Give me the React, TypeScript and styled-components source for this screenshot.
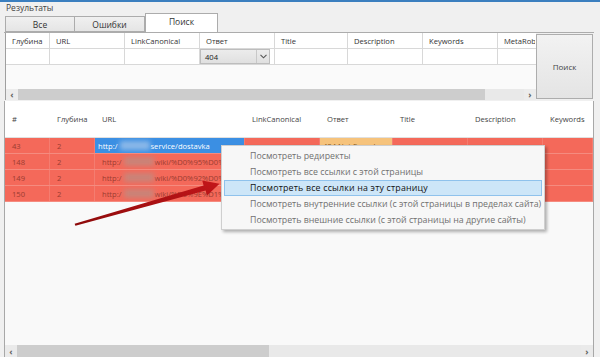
import React from 'react';
import styled, { createGlobalStyle } from 'styled-components';

const GlobalStyle = createGlobalStyle`
	html, body {
		margin: 0;
		padding: 0;
		background: #f0f0f0;
	}
	body {
		font-family: 'Open Sans', 'Noto Sans', 'Liberation Sans', sans-serif;
		font-size: 8.5px;
		color: #333;
	}
`;

const Window = styled.div`
	position: relative;
	width: 600px;
	height: 357px;
	overflow: hidden;
	background: #f0f0f0;
	border-top: 2px solid #3b7fbf;
	box-sizing: border-box;
	display: flex;
	flex-direction: column;
`;

const Caption = styled.div`
	height: 11px;
	line-height: 11px;
	padding-left: 6px;
	color: #444;
`;

const TabStrip = styled.div`
	height: 19px;
	padding-left: 5px;
	display: flex;
	align-items: flex-end;
`;

const Tab = styled.div<{ $active?: boolean }>`
	width: ${(p) => (p.$active ? 73 : 70)}px;
	height: ${(p) => (p.$active ? 19 : 16)}px;
	box-sizing: border-box;
	border: 1px solid #acacac;
	border-bottom: ${(p) => (p.$active ? 'none' : '1px solid #acacac')};
	border-left: ${(p) => (p.$active ? '1px solid #acacac' : 'none')};
	background: ${(p) =>
		p.$active ? '#ffffff' : 'linear-gradient(#f0f0f0, #e5e5e5)'};
	display: flex;
	align-items: center;
	justify-content: center;
	padding-bottom: ${(p) => (p.$active ? 3 : 0)}px;
	color: #333;

	&:first-child {
		border-left: 1px solid #acacac;
	}
`;

const Body = styled.div`
	flex: 1;
	display: flex;
	flex-direction: column;
	padding: 0 6px 0 4px;
	min-height: 0;
`;

const TopSection = styled.div`
	height: 68px;
	display: flex;
	padding-left: 1px;
	border-top: 1px solid #acacac;
	box-sizing: border-box;
	font-size: 7.6px;
`;

const FilterBox = styled.div`
	width: 530px;
	display: flex;
	flex-direction: column;
	background: #fafafa;
	border-left: 1px solid #9f9f9f;
`;

const FilterRow = styled.div<{ $header?: boolean }>`
	display: grid;
	grid-template-columns: 44px 75px 75px 75px 73px 75px 75px 37px;
	height: 16px;
	background: #fff;
	border-bottom: 1px solid #d8d8d8;
	box-sizing: border-box;
	color: ${(p) => (p.$header ? '#333' : '#222')};
`;

const FilterCell = styled.div`
	border-right: 1px solid #d8d8d8;
	padding-left: 6px;
	display: flex;
	align-items: center;
	overflow: hidden;
	white-space: nowrap;

	&:last-child {
		border-right: none;
	}
`;

const Select = styled.div`
	height: 15px;
	background: linear-gradient(#ececec, #e0e0e0);
	border: 1px solid #bdbdbd;
	box-sizing: border-box;
	display: flex;
	align-items: center;
	justify-content: space-between;
	padding-left: 4px;
	flex: 1;
	margin: 0 4px 0 -6px;
`;

const SelectArrow = styled.span`
	width: 12px;
	height: 100%;
	border-left: 1px solid #c8c8c8;
	display: flex;
	align-items: center;
	justify-content: center;
`;

const FilterSpacer = styled.div`
	flex: 1;
`;

const ScrollBar = styled.div`
	height: 11px;
	display: flex;
	align-items: center;
	background: #ececec;
	color: #555;
`;

const ScrollTrack = styled.div`
	flex: 1;
	height: 100%;
	background: #e9e9e9;
	display: flex;
`;

const ScrollThumb = styled.div`
	height: 100%;
	background: #cdcdcd;
`;

const ScrollArrow = styled.span`
	width: 12px;
	text-align: center;
	font-size: 9px;
	font-weight: 700;
	line-height: 11px;
	color: #606060;
`;

const SearchButton = styled.div`
	width: 57px;
	margin-top: 1px;
	height: 65px;
	box-sizing: border-box;
	border: 1px solid #adadad;
	background: linear-gradient(#f2f2f2, #e4e4e4);
	display: flex;
	align-items: center;
	justify-content: center;
	color: #444;
	font-size: 8px;
`;

const GridPanel = styled.div`
	flex: 1;
	margin-top: 1px;
	display: flex;
	flex-direction: column;
	border-left: 1px solid #a8a8a8;
	border-right: 1px solid #a8a8a8;
	background: #f9f9f9;
	font-size: 7.6px;
`;

const GRID_COLS = '45px 45px 150px 75px 73px 75px 75px 1fr';

const GridHeader = styled.div`
	display: grid;
	grid-template-columns: ${GRID_COLS};
	height: 36px;
	background: #fff;
	border-bottom: 1px solid #e0e0e0;
	color: #444;
`;

const HeadCell = styled.div`
	display: flex;
	align-items: center;
	padding-left: 7px;
	white-space: nowrap;
	overflow: hidden;
`;

const GridRow = styled.div`
	display: grid;
	grid-template-columns: ${GRID_COLS};
	height: 16px;
	background: #f4695a;
	border-bottom: 1px solid #f58b7f;
	box-sizing: border-box;
	color: #9b3c31;
`;

const Cell = styled.div<{ $tone?: 'selected' | 'warn' }>`
	display: flex;
	align-items: center;
	white-space: nowrap;
	overflow: hidden;
	border-right: 1px solid #f47d70;
	background: ${(p) =>
		p.$tone === 'selected' ? '#3b8fe3' : p.$tone === 'warn' ? '#f6c37c' : 'transparent'};
	color: ${(p) => (p.$tone === 'selected' ? '#fff' : p.$tone === 'warn' ? '#8a5a20' : 'inherit')};
	padding-left: ${(p) => (p.$tone ? 3 : 7)}px;
`;

const Blurred = styled.span<{ $light?: boolean }>`
	display: inline-block;
	width: 30px;
	height: 9px;
	margin: 0 1px 0 2px;
	background: ${(p) => (p.$light ? '#8bb8e8' : '#c98479')};
	filter: blur(2.5px);
	flex-shrink: 0;
`;

const GridFill = styled.div`
	flex: 1;
`;

const BottomScroll = styled.div`
	height: 12px;
	display: flex;
	align-items: center;
	background: #eaeaea;
`;

const Menu = styled.div`
	position: absolute;
	left: 221px;
	top: 143px;
	width: 324px;
	box-sizing: border-box;
	padding: 2px 2px 1px;
	background: #f7f7f7;
	border: 1px solid #cfcfcf;
	box-shadow: 2px 2px 3px rgba(0, 0, 0, 0.3);
	color: #707070;
	font-size: 8.8px;
`;

const MenuItem = styled.div<{ $hot?: boolean }>`
	height: 16px;
	box-sizing: border-box;
	display: flex;
	align-items: center;
	padding-left: 25px;
	border: 1px solid ${(p) => (p.$hot ? '#8fc2ec' : 'transparent')};
	background: ${(p) => (p.$hot ? '#cde6f8' : 'transparent')};
	color: ${(p) => (p.$hot ? '#111' : '#707070')};
	letter-spacing: ${(p) => (p.$hot ? '0.2px' : '0')};
	white-space: nowrap;
`;

const Overlay = styled.svg`
	position: absolute;
	left: 0;
	top: 0;
	pointer-events: none;
`;

const filterCols = ['Глубина', 'URL', 'LinkCanonical', 'Ответ', 'Title', 'Description', 'Keywords', 'MetaRobots'];
const gridCols = ['#', 'Глубина', 'URL', 'LinkCanonical', 'Ответ', 'Title', 'Description', 'Keywords'];

const rows = [
	{ id: '43', path: 'service/dostavka', selected: true },
	{ id: '148', path: 'wiki/%D0%95%D0%9F%D1%80' },
	{ id: '149', path: 'wiki/%D0%92%D0%B8%D0%B4' },
	{ id: '150', path: 'wiki/%D0%9E%D1%82%D0%B7' },
];

const menuItems = [
	'Посмотреть редиректы',
	'Посмотреть все ссылки с этой страницы',
	'Посмотреть все ссылки на эту страницу',
	'Посмотреть внутренние ссылки (с этой страницы в пределах сайта)',
	'Посмотреть внешние ссылки (с этой страницы на другие сайты)',
];

const App = () => {
	return (
		<>
			<GlobalStyle />
			<Window>
				<Caption>Результаты</Caption>
				<TabStrip>
					<Tab>Все</Tab>
					<Tab>Ошибки</Tab>
					<Tab $active>Поиск</Tab>
				</TabStrip>
				<Body>
					<TopSection>
						<FilterBox>
							<FilterRow $header>
								{filterCols.map((c) => (
									<FilterCell key={c}>{c}</FilterCell>
								))}
							</FilterRow>
							<FilterRow>
								<FilterCell />
								<FilterCell />
								<FilterCell />
								<FilterCell>
									<Select>
										404
										<SelectArrow>
											<svg width="7" height="5" viewBox="0 0 7 5">
												<path d="M0.5 0.8 L3.5 3.8 L6.5 0.8" fill="none" stroke="#555" strokeWidth="1.1" />
											</svg>
										</SelectArrow>
									</Select>
								</FilterCell>
								<FilterCell />
								<FilterCell />
								<FilterCell />
								<FilterCell />
							</FilterRow>
							<FilterSpacer />
							<ScrollBar>
								<ScrollArrow>‹</ScrollArrow>
								<ScrollTrack>
									<ScrollThumb style={{ width: 467 }} />
								</ScrollTrack>
								<ScrollArrow>›</ScrollArrow>
							</ScrollBar>
						</FilterBox>
						<SearchButton>Поиск</SearchButton>
					</TopSection>
					<GridPanel>
						<GridHeader>
							{gridCols.map((c) => (
								<HeadCell key={c}>{c}</HeadCell>
							))}
						</GridHeader>
						{rows.map((r) => (
							<GridRow key={r.id}>
								<Cell>{r.id}</Cell>
								<Cell>2</Cell>
								<Cell $tone={r.selected ? 'selected' : undefined}>
									http:/
									<Blurred $light={r.selected} />
									{r.path}
								</Cell>
								<Cell />
								<Cell $tone={r.selected ? 'warn' : undefined}>{r.selected ? '404 Not Found' : ''}</Cell>
								<Cell />
								<Cell />
								<Cell />
							</GridRow>
						))}
						<GridFill />
						<BottomScroll>
							<ScrollArrow>‹</ScrollArrow>
							<ScrollTrack>
								<ScrollThumb style={{ width: 252 }} />
							</ScrollTrack>
							<ScrollArrow>›</ScrollArrow>
						</BottomScroll>
					</GridPanel>
				</Body>
				<Menu>
					{menuItems.map((m, i) => (
						<MenuItem key={m} $hot={i === 2}>
							{m}
						</MenuItem>
					))}
				</Menu>
				<Overlay width="600" height="357" viewBox="0 0 600 357">
					<defs>
						<linearGradient id="arrowFill" x1="0" y1="1" x2="1" y2="0">
							<stop offset="0" stopColor="#8c0a0a" />
							<stop offset="1" stopColor="#c4161a" />
						</linearGradient>
					</defs>
					<polygon
						points="74.6,221.8 203.6,183.6 202.2,178.4 219.5,181.8 207,193.6 205.6,188.6 75.4,223.8"
						fill="url(#arrowFill)"
					/>
				</Overlay>
			</Window>
		</>
	);
};

export default App;
